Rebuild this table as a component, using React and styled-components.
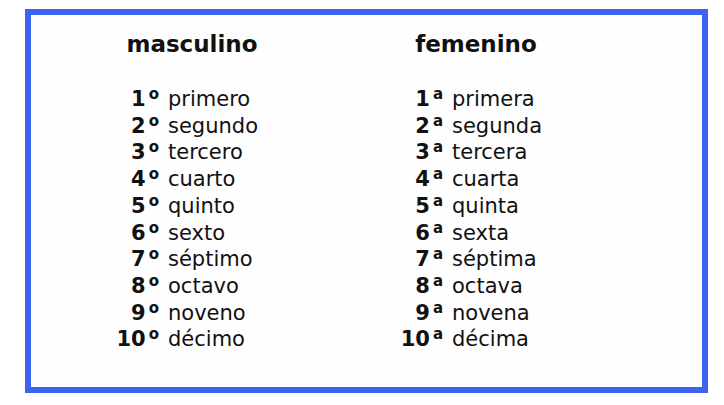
import React from "react";
import styled, { createGlobalStyle } from "styled-components";

const Global = createGlobalStyle`
  html, body { margin: 0; padding: 0; background: #ffffff; }
  body { font-family: "DejaVu Sans", Verdana, sans-serif; color: #111; }
`;

const Page = styled.div`
  padding: 9px 0 0 25px;
`;

const Frame = styled.div`
  box-sizing: border-box;
  width: 683px;
  height: 384px;
  border: 6px solid #3d63f1;
  background: #fefefe;
  padding: 16px 0 0 19px;
  display: grid;
  grid-template-columns: 284px 284px;
  align-content: start;
`;

const Column = styled.div`
  display: flex;
  flex-direction: column;
`;

const Heading = styled.div`
  font-weight: bold;
  font-size: 23px;
  line-height: 26px;
  text-align: center;
  color: #111;
`;

const List = styled.div`
  margin-top: 29px;
  display: grid;
  grid-template-columns: 110px auto;
  column-gap: 8px;
  font-size: 21px;
  line-height: 26.7px;
`;

const Num = styled.span`
  font-weight: bold;
  text-align: right;
  white-space: nowrap;
`;

const Mark = styled.span`
  display: inline-block;
  font-size: 15px;
  font-weight: bold;
  line-height: 1;
  vertical-align: 7px;
  margin-left: 3px;
  padding-right: 1px;
`;

const Word = styled.span`
  font-weight: normal;
`;

const masc = ["primero", "segundo", "tercero", "cuarto", "quinto", "sexto", "séptimo", "octavo", "noveno", "décimo"];
const fem = ["primera", "segunda", "tercera", "cuarta", "quinta", "sexta", "séptima", "octava", "novena", "décima"];

function Col({ title, words, mark }) {
  return (
    <Column>
      <Heading>{title}</Heading>
      <List>
        {words.map((w, i) => (
          <React.Fragment key={w}>
            <Num>
              {i + 1}
              <Mark>{mark}</Mark>
            </Num>
            <Word>{w}</Word>
          </React.Fragment>
        ))}
      </List>
    </Column>
  );
}

export default function App() {
  return (
    <Page>
      <Global />
      <Frame>
        <Col title="masculino" words={masc} mark="o" />
        <Col title="femenino" words={fem} mark="a" />
      </Frame>
    </Page>
  );
}
